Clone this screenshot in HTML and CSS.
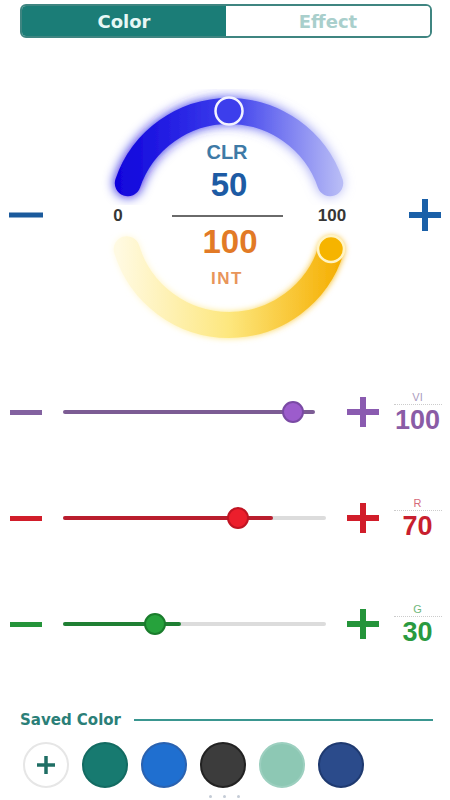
FILE: index.html
```html
<!DOCTYPE html>
<html lang="en">
<head>
    <meta charset="UTF-8">
    <meta name="viewport" content="width=device-width, initial-scale=1.0">
    <title>Light Color Control</title>
    <link rel="stylesheet" href="styles.css">
</head>
<body>

    <div class="page">

        <div class="tabs">
            <div class="tab active">Color</div>
            <div class="tab">Effect</div>
        </div>

        <div class="dial-row">
            <div class="dial-side left">
                <svg class="icon minus-icon" width="34" height="6" viewBox="0 0 34 6"><line x1="0" y1="3" x2="34" y2="3"/></svg>
            </div>
            <svg class="dial" width="260" height="260" viewBox="0 0 260 260">
                <defs>
                    <linearGradient id="blueGrad" gradientUnits="userSpaceOnUse" x1="18" y1="0" x2="242" y2="0">
                        <stop offset="0" stop-color="#1004dc"/>
                        <stop offset="0.5" stop-color="#3c3eec"/>
                        <stop offset="1" stop-color="#b8bcf6"/>
                    </linearGradient>
                    <linearGradient id="yellowGrad" gradientUnits="userSpaceOnUse" x1="18" y1="0" x2="242" y2="0">
                        <stop offset="0" stop-color="#fffae2"/>
                        <stop offset="0.5" stop-color="#fde77e"/>
                        <stop offset="1" stop-color="#f5ae00"/>
                    </linearGradient>
                    <filter id="glow" x="-20%" y="-30%" width="140%" height="160%">
                        <feGaussianBlur stdDeviation="6" result="blur"/>
                        <feMerge>
                            <feMergeNode in="blur"/>
                            <feMergeNode in="SourceGraphic"/>
                        </feMerge>
                    </filter>
                    <filter id="softGlow" x="-20%" y="-30%" width="140%" height="160%">
                        <feGaussianBlur stdDeviation="3" result="blur"/>
                        <feMerge>
                            <feMergeNode in="blur"/>
                            <feMergeNode in="SourceGraphic"/>
                        </feMerge>
                    </filter>
                </defs>

                <!-- colour arc -->
                <path d="M 28.8 95.2 A 107 107 0 0 1 231.2 95.2" fill="none" stroke="url(#blueGrad)" stroke-width="26" stroke-linecap="round" filter="url(#glow)"/>
                <!-- intensity arc -->
                <path d="M 232.3 161.3 A 107 107 0 0 1 27.7 161.3" fill="none" stroke="url(#yellowGrad)" stroke-width="26" stroke-linecap="round" filter="url(#softGlow)"/>

                <circle cx="130" cy="23" r="13.5" fill="#3c3eec" stroke="#f2f2ff" stroke-width="2.5"/>
                <circle cx="232" cy="161" r="13" fill="#f6b400" stroke="#fff4c4" stroke-width="2.5"/>

                <text class="dial-clr" x="128" y="71">CLR</text>
                <text class="dial-value blue" x="130" y="108">50</text>
                <line x1="73" y1="128" x2="184" y2="128" stroke="#6a6a6a" stroke-width="2"/>
                <text class="dial-value orange" x="131" y="165">100</text>
                <text class="dial-int" x="128" y="196">INT</text>

                <text class="dial-limit" x="19" y="133">0</text>
                <text class="dial-limit" x="233" y="133">100</text>
            </svg>
            <div class="dial-side right">
                <svg class="icon plus-icon" width="32" height="32" viewBox="0 0 32 32"><line x1="0" y1="16" x2="32" y2="16"/><line x1="16" y1="0" x2="16" y2="32"/></svg>
            </div>
        </div>

        <div class="slider-row purple">
            <svg class="icon minus-icon" width="32" height="5" viewBox="0 0 32 5"><line x1="0" y1="2.5" x2="32" y2="2.5"/></svg>
            <div class="track full">
                <div class="fill" style="width: 96%"></div>
                <div class="knob" style="left: 87.5%"></div>
            </div>
            <svg class="icon plus-icon" width="32" height="30" viewBox="0 0 32 30"><line x1="0" y1="15" x2="32" y2="15"/><line x1="16" y1="0" x2="16" y2="30"/></svg>
            <div class="value">
                <div class="value-label">VI</div>
                <div class="value-num">100</div>
            </div>
        </div>

        <div class="slider-row red">
            <svg class="icon minus-icon" width="32" height="5" viewBox="0 0 32 5"><line x1="0" y1="2.5" x2="32" y2="2.5"/></svg>
            <div class="track">
                <div class="fill" style="width: 80%"></div>
                <div class="knob" style="left: 66.5%"></div>
            </div>
            <svg class="icon plus-icon" width="32" height="30" viewBox="0 0 32 30"><line x1="0" y1="15" x2="32" y2="15"/><line x1="16" y1="0" x2="16" y2="30"/></svg>
            <div class="value">
                <div class="value-label">R</div>
                <div class="value-num">70</div>
            </div>
        </div>

        <div class="slider-row green">
            <svg class="icon minus-icon" width="32" height="5" viewBox="0 0 32 5"><line x1="0" y1="2.5" x2="32" y2="2.5"/></svg>
            <div class="track">
                <div class="fill" style="width: 45%"></div>
                <div class="knob" style="left: 35%"></div>
            </div>
            <svg class="icon plus-icon" width="32" height="30" viewBox="0 0 32 30"><line x1="0" y1="15" x2="32" y2="15"/><line x1="16" y1="0" x2="16" y2="30"/></svg>
            <div class="value">
                <div class="value-label">G</div>
                <div class="value-num">30</div>
            </div>
        </div>

        <div class="saved">
            <div class="saved-header">
                <span class="saved-title">Saved Color</span>
                <span class="saved-line"></span>
            </div>
            <div class="swatches">
                <div class="swatch add">
                    <svg width="18" height="18" viewBox="0 0 18 18"><line x1="0" y1="9" x2="18" y2="9"/><line x1="9" y1="0" x2="9" y2="18"/></svg>
                </div>
                <div class="swatch teal"></div>
                <div class="swatch blue"></div>
                <div class="swatch dark"></div>
                <div class="swatch mint"></div>
                <div class="swatch navy"></div>
            </div>
            <div class="dots">
                <span></span><span></span><span></span>
            </div>
        </div>

    </div>

</body>
</html>
```

FILE: styles.css
```css
body {
    margin: 0;
    background: #ffffff;
    font-family: "Liberation Sans", Arial, sans-serif;
}
.page {
    width: 450px;
    height: 800px;
    overflow: hidden;
}

/* tabs */
.tabs {
    display: flex;
    height: 30px;
    margin: 4px 18px 0 20px;
    border: 2px solid #3f8581;
    border-radius: 6px;
    overflow: hidden;
}
.tab {
    flex: 1;
    display: flex;
    align-items: center;
    justify-content: center;
    font-family: "DejaVu Sans", sans-serif;
    font-weight: bold;
    font-size: 18px;
    color: #a9cfcc;
    background: #ffffff;
}
.tab.active {
    background: #1b7d77;
    color: #e6f7f5;
}

/* icons */
.icon line {
    stroke: currentColor;
    stroke-width: 6;
}
.minus-icon line {
    stroke-width: 5;
}

/* dial */
.dial-row {
    display: grid;
    grid-template-columns: 99px 260px 1fr;
    height: 260px;
    margin-top: 50px;
    color: #1c62aa;
}
.dial-side {
    display: flex;
    align-items: center;
    padding-bottom: 6px;
}
.dial-side.left {
    padding-left: 9px;
}
.dial-side.right {
    justify-content: flex-end;
    padding-right: 9px;
}
.dial-side.right .icon line {
    stroke: #1a60a8;
}
.dial-side.left .icon line {
    stroke: #1b5a9c;
}
.dial text {
    font-family: "Liberation Sans", Arial, sans-serif;
    font-weight: bold;
    text-anchor: middle;
}
.dial-clr {
    font-size: 20px;
    fill: #3e7aa6;
}
.dial-value {
    font-size: 33px;
}
.dial-value.blue {
    fill: #1d5ba4;
}
.dial-value.orange {
    fill: #e27a26;
}
.dial-int {
    font-size: 17px;
    letter-spacing: 1.5px;
    fill: #e8955a;
}
.dial-limit {
    font-size: 17px;
    fill: #363636;
}

/* sliders */
.slider-row {
    display: grid;
    grid-template-columns: 32px 263px 32px 50px;
    column-gap: 21px;
    align-items: center;
    height: 46px;
    padding-left: 10px;
}
.slider-row.purple {
    margin-top: 41px;
    color: #8a5bb0;
}
.slider-row.red {
    margin-top: 60px;
    color: #d11d2a;
}
.slider-row.green {
    margin-top: 60px;
    color: #24943a;
}
.slider-row .value {
    margin-left: -15px;
}
.track {
    position: relative;
    height: 4px;
    background: #dcdcdc;
    border-radius: 2px;
}
.track.full {
    background: transparent;
}
.fill {
    height: 100%;
    border-radius: 2px;
}
.knob {
    position: absolute;
    top: 50%;
    width: 18px;
    height: 18px;
    margin: -11px 0 0 -11px;
    border-radius: 50%;
    border: 2px solid;
}
.purple .fill { background: #7c5c94; }
.purple .knob { background: #9c5ccc; border-color: #7a4aa4; }
.purple .minus-icon line { stroke: #8362a0; }
.red .fill { background: #b91d2d; }
.red .knob { background: #ec1e2c; border-color: #c01422; }
.green .fill { background: #1f7f33; }
.green .knob { background: #26a23c; border-color: #1a7c2c; }

.value {
    display: flex;
    flex-direction: column;
    align-items: center;
}
.value-label {
    width: 48px;
    text-align: center;
    font-size: 11px;
    line-height: 13px;
    border-bottom: 1px dotted #cccccc;
    margin-bottom: 2px;
}
.purple .value-label { color: #ab9cc0; }
.red .value-label { color: #d66a78; }
.green .value-label { color: #6fb87c; }
.value-num {
    font-size: 27px;
    font-weight: bold;
    line-height: 26px;
}
.purple .value-num { color: #8a5ca6; }
.red .value-num { color: #c81f2f; }
.green .value-num { color: #2a9a40; }

/* saved colours */
.saved {
    margin-top: 63px;
}
.saved-header {
    display: flex;
    align-items: center;
    padding: 0 17px 0 20px;
    height: 20px;
}
.saved-title {
    font-family: "DejaVu Sans", sans-serif;
    font-weight: bold;
    font-size: 15px;
    color: #2b7f78;
}
.saved-line {
    flex: 1;
    height: 2px;
    margin-left: 13px;
    background: #3a9690;
}
.swatches {
    display: flex;
    gap: 13px;
    padding-left: 23px;
    margin-top: 12px;
}
.swatch {
    width: 46px;
    height: 46px;
    border-radius: 50%;
    box-sizing: border-box;
}
.swatch.add {
    display: flex;
    align-items: center;
    justify-content: center;
    border: 2px solid #e6e6e6;
    background: #ffffff;
}
.swatch.add line {
    stroke: #1f6e64;
    stroke-width: 3.5;
}
.swatch.teal { background: #177a70; border: 2px solid #136b62; }
.swatch.blue { background: #1f6fd0; border: 2px solid #2a62b0; }
.swatch.dark { background: #3c3c3c; border: 2px solid #222222; }
.swatch.mint { background: #8dc8b4; border: 2px solid #9ccfbf; }
.swatch.navy { background: #2b4b8b; border: 2px solid #1f3a70; }
.dots {
    display: flex;
    justify-content: center;
    gap: 11px;
    margin-top: 7px;
    padding-right: 2px;
}
.dots span {
    width: 3px;
    height: 3px;
    border-radius: 50%;
    background: #c4ccd6;
}
```
